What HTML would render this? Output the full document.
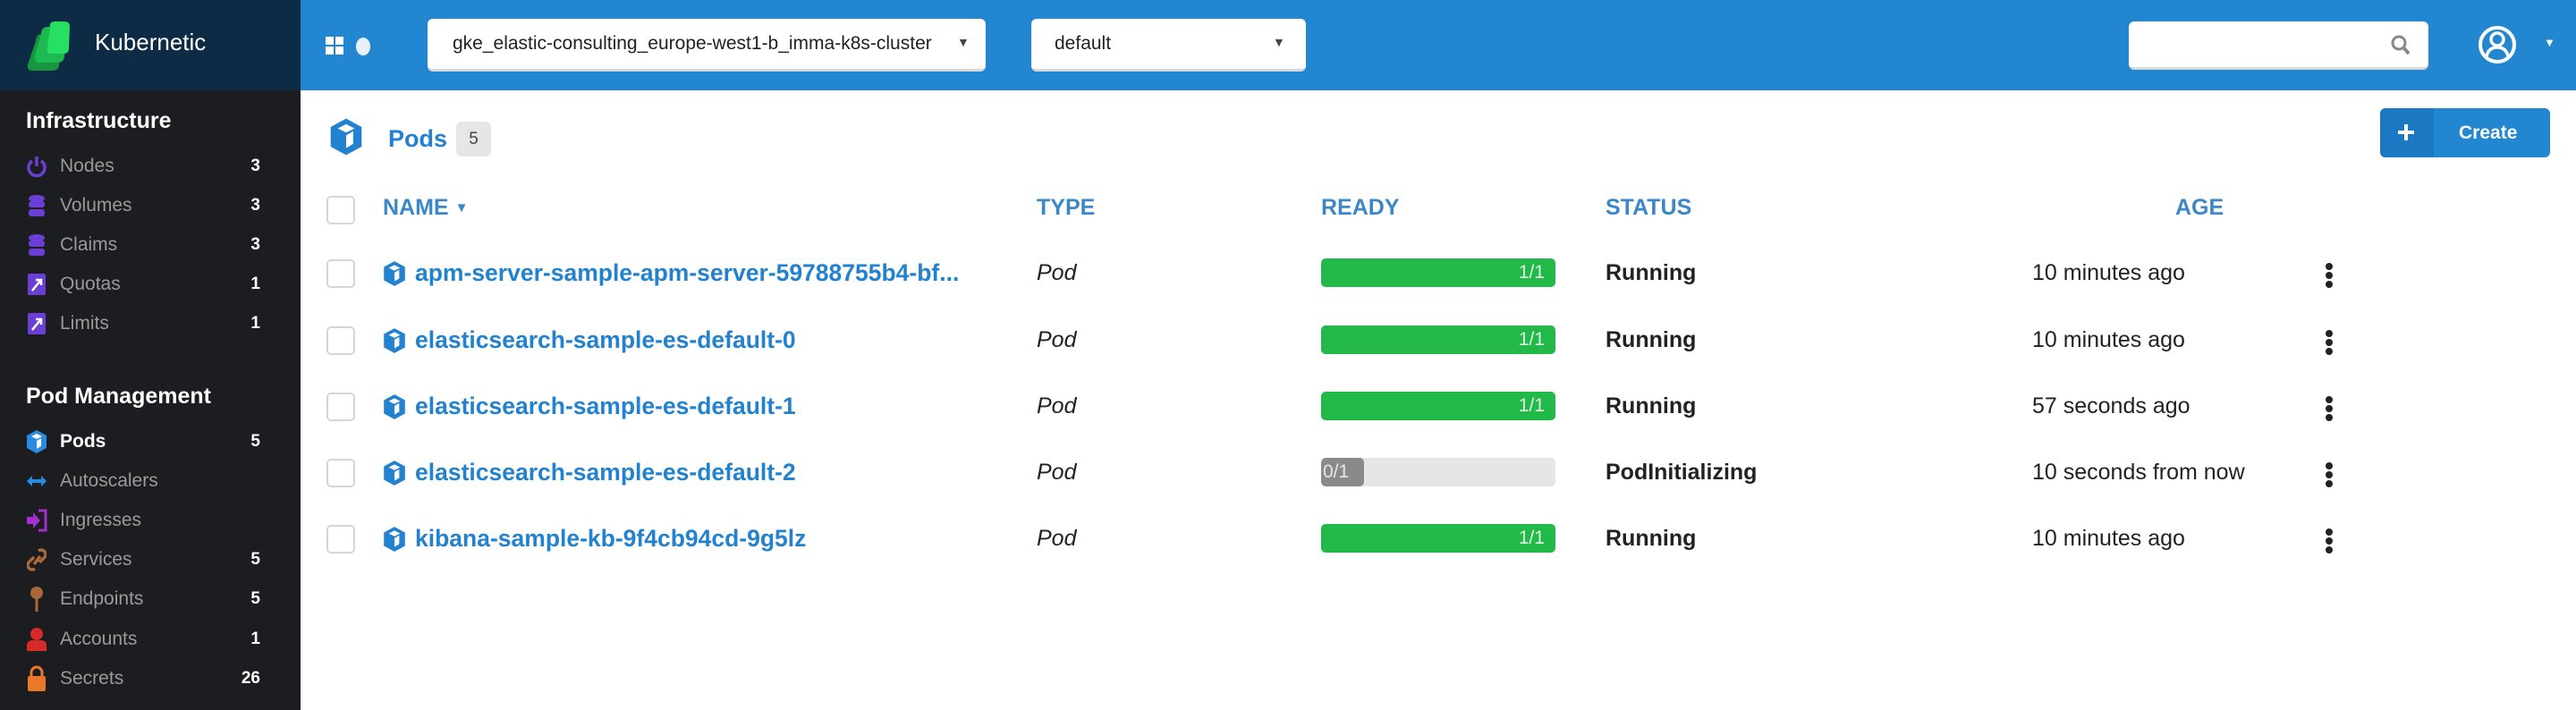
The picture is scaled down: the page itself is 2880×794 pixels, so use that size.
<!DOCTYPE html>
<html><head><meta charset="utf-8"><style>
*{box-sizing:border-box;margin:0;padding:0}
body{width:2880px;height:794px;overflow:hidden;background:#fff;font-family:"Liberation Sans",sans-serif;position:relative}
.a{position:absolute}
#side{left:0;top:0;width:336px;height:794px;background:#1c1d20}
#logo{left:0;top:0;width:336px;height:101px;background:#0d2b45}
#top{left:336px;top:0;width:2544px;height:101px;background:#2286d0}
.sel{background:#fff;border-radius:6px;border-bottom:3px solid #d8d8d8}
.sh{color:#fff;font-size:25px;font-weight:bold;left:29px}
.it{left:29px;width:262px;height:30px;display:flex;align-items:center;font-size:21px;color:#9a9a9a}
.it .ic{width:24px;height:26px;margin-right:14px;display:flex;align-items:center;justify-content:center}
.it .n{margin-left:auto;color:#fff;font-size:19px;font-weight:bold}
.th{top:218px;color:#3b87c8;font-size:25px;font-weight:bold}
.cb{width:32px;height:32px;border:2px solid #d6d6d6;border-radius:5px;background:#fff}
.nm{left:428px;color:#2382cf;font-size:26.5px;font-weight:bold;display:flex;align-items:center;gap:10px;white-space:nowrap}
.ty{left:1159px;font-style:italic;font-size:25px;color:#222}
.bar{left:1477px;width:262px;height:32px;border-radius:5px;background:#e6e6e6;overflow:hidden}
.st{left:1795px;font-size:25px;font-weight:bold;color:#222}
.ag{left:2272px;font-size:25px;color:#222}
.kb{left:2600px;width:10px}
.kb i{display:block;width:8px;height:8px;border-radius:50%;background:#222;margin:2px 0}
</style></head><body>
<div class="a" id="side"></div>
<div class="a" id="logo">
 <svg class="a" style="left:28px;top:24px" width="56" height="56" viewBox="0 0 56 56">
  <path d="M12 22 Q12 14 20 14 L36 14 Q40 14 40 20 L38 48 Q38 55 30 55 L8 55 Q2 55 3 48 Z" fill="#17963f"/>
  <path d="M18 14 Q18 6 26 6 L40 6 Q46 6 46 12 L44 38 Q44 46 36 46 L16 46 Q10 46 11 38 Z" fill="#1dba4f"/>
  <path d="M28 4 Q28 0 34 0 L44 0 Q50 0 50 6 L49 30 Q49 36 43 36 L30 36 Q24 36 25 30 Z" fill="#27e063"/>
 </svg>
 <div class="a" style="left:106px;top:32px;color:#fff;font-size:26px">Kubernetic</div>
</div>
<div class="a" id="top">
 <svg class="a" style="left:28px;top:41px" width="60" height="22"><rect x="0" y="0" width="9" height="9" fill="#fff"/><rect x="11" y="0" width="9" height="9" fill="#fff"/><rect x="0" y="11" width="9" height="9" fill="#fff"/><rect x="11" y="11" width="9" height="9" fill="#fff"/><ellipse cx="42" cy="11" rx="8" ry="10" fill="#e8f0fa"/></svg>
 <div class="a sel" style="left:142px;top:21px;width:624px;height:59px"><span class="a" style="left:28px;top:16px;font-size:21px;color:#222">gke_elastic-consulting_europe-west1-b_imma-k8s-cluster</span><span class="a" style="left:592px;top:18px;font-size:14px;color:#444">▼</span></div>
 <div class="a sel" style="left:817px;top:21px;width:307px;height:59px"><span class="a" style="left:26px;top:16px;font-size:21px;color:#222">default</span><span class="a" style="left:270px;top:18px;font-size:14px;color:#444">▼</span></div>
 <div class="a sel" style="left:2044px;top:24px;width:335px;height:54px"><svg class="a" style="left:292px;top:14px" width="24" height="26"><circle cx="10" cy="10" r="7" stroke="#888" stroke-width="3" fill="none"/><line x1="15" y1="15" x2="21" y2="22" stroke="#888" stroke-width="4"/></svg></div>
 <svg class="a" style="left:2434px;top:26px" width="44" height="48"><circle cx="22" cy="24" r="19" stroke="#fff" stroke-width="4" fill="none"/><circle cx="22" cy="18" r="7" stroke="#fff" stroke-width="3.5" fill="none"/><path d="M10 37 Q12 27 22 27 Q32 27 34 37" stroke="#fff" stroke-width="3.5" fill="none"/></svg>
 <span class="a" style="left:2508px;top:40px;color:#fff;font-size:13px">▼</span>
</div>

<div class="a sh" style="top:121px">Infrastructure</div>
<div class="a it" style="top:171px"><span class="ic"><svg width="22" height="24"><path d="M6 6 A9 9 0 1 0 16 6" stroke="#6b3fd6" stroke-width="3.5" fill="none"/><line x1="11" y1="1" x2="11" y2="12" stroke="#6b3fd6" stroke-width="3.5"/></svg></span>Nodes<span class="n">3</span></div>
<div class="a it" style="top:215px"><span class="ic"><svg width="20" height="26"><ellipse cx="10" cy="5" rx="9" ry="4" fill="#6b3fd6"/><rect x="1" y="8" width="18" height="7" rx="3" fill="#6b3fd6"/><rect x="1" y="17" width="18" height="8" rx="3" fill="#6b3fd6"/></svg></span>Volumes<span class="n">3</span></div>
<div class="a it" style="top:259px"><span class="ic"><svg width="20" height="26"><ellipse cx="10" cy="5" rx="9" ry="4" fill="#6b3fd6"/><rect x="1" y="8" width="18" height="7" rx="3" fill="#6b3fd6"/><rect x="1" y="17" width="18" height="8" rx="3" fill="#6b3fd6"/></svg></span>Claims<span class="n">3</span></div>
<div class="a it" style="top:303px"><span class="ic"><svg width="20" height="24"><rect width="20" height="24" rx="2" fill="#6b3fd6"/><path d="M5 19 L14 8 M9 7 L15 7 L15 13" stroke="#fff" stroke-width="2.5" fill="none"/></svg></span>Quotas<span class="n">1</span></div>
<div class="a it" style="top:347px"><span class="ic"><svg width="20" height="24"><rect width="20" height="24" rx="2" fill="#6b3fd6"/><path d="M5 19 L14 8 M9 7 L15 7 L15 13" stroke="#fff" stroke-width="2.5" fill="none"/></svg></span>Limits<span class="n">1</span></div>

<div class="a sh" style="top:429px">Pod Management</div>
<div class="a it" style="top:479px;color:#fff;font-weight:bold"><span class="ic"><svg width="24" height="28" viewBox="0 0 24 28"><path d="M12 1 L23 7 L23 21 L12 27 L1 21 L1 7 Z" fill="#2a8ce0"/><path d="M6 8 L12 5 L18 8 L12 11 Z M12 13 L17 10 L17 19 L12 22 Z" fill="#fff"/></svg></span>Pods<span class="n">5</span></div>
<div class="a it" style="top:523px"><span class="ic"><svg width="24" height="14"><path d="M1 7 L7 1 L7 13 Z M23 7 L17 1 L17 13 Z" fill="#2a8ce0"/><rect x="5" y="5" width="14" height="4" fill="#2a8ce0"/></svg></span>Autoscalers</div>
<div class="a it" style="top:567px"><span class="ic"><svg width="24" height="26"><path d="M14 2 L22 2 L22 24 L14 24" stroke="#a22fd0" stroke-width="3" fill="none"/><path d="M1 9 L8 9 L8 4 L16 13 L8 22 L8 17 L1 17 Z" fill="#a22fd0"/></svg></span>Ingresses</div>
<div class="a it" style="top:611px"><span class="ic"><svg width="22" height="28"><path d="M13 4 a5 5 0 0 1 7 7 l-6 6 M9 24 a5 5 0 0 1 -7 -7 l6 -6 M8 19 L15 10" stroke="#a8683a" stroke-width="3.5" fill="none"/></svg></span>Services<span class="n">5</span></div>
<div class="a it" style="top:655px"><span class="ic"><svg width="16" height="30"><circle cx="8" cy="8" r="7" fill="#a8683a"/><rect x="6.5" y="14" width="3" height="15" fill="#a8683a"/></svg></span>Endpoints<span class="n">5</span></div>
<div class="a it" style="top:700px"><span class="ic"><svg width="24" height="28"><circle cx="12" cy="8" r="7" fill="#d62a2a"/><path d="M1 27 L1 21 Q1 15 8 15 L16 15 Q23 15 23 21 L23 27 Z" fill="#d62a2a"/></svg></span>Accounts<span class="n">1</span></div>
<div class="a it" style="top:744px"><span class="ic"><svg width="22" height="30"><path d="M5 13 L5 8 A6 6 0 0 1 17 8 L17 13" stroke="#e8782a" stroke-width="3" fill="none"/><rect x="1" y="12" width="20" height="17" rx="2" fill="#e8782a"/></svg></span>Secrets<span class="n">26</span></div>

<svg class="a" style="left:366px;top:131px" width="42" height="44" viewBox="0 0 24 28"><path d="M12 1 L23 7 L23 21 L12 27 L1 21 L1 7 Z" fill="#2382cf"/><path d="M6 8 L12 5 L18 8 L12 11 Z M12 13 L17 10 L17 19 L12 22 Z" fill="#fff"/></svg>
<div class="a" style="left:434px;top:140px;color:#2382cf;font-size:27px;font-weight:bold">Pods</div>
<div class="a" style="left:510px;top:136px;width:39px;height:39px;background:#e6e6e6;border-radius:6px;font-size:19px;color:#444;text-align:center;line-height:39px">5</div>
<div class="a" style="left:2661px;top:121px;width:190px;height:55px;background:#2286d0;border-radius:6px;overflow:hidden">
 <div class="a" style="left:0;top:0;width:60px;height:55px;background:#1b78c2"></div>
 <div class="a" style="left:20px;top:25px;width:18px;height:4px;background:#fff"></div>
 <div class="a" style="left:27px;top:18px;width:4px;height:18px;background:#fff"></div>
 <div class="a" style="left:88px;top:16px;color:#fff;font-size:21px;font-weight:bold">Create</div>
</div>

<div class="a cb" style="left:365px;top:219px"></div>
<div class="a th" style="left:428px">NAME <span style="font-size:15px;position:relative;top:-3px">▼</span></div>
<div class="a th" style="left:1159px">TYPE</div>
<div class="a th" style="left:1477px">READY</div>
<div class="a th" style="left:1795px">STATUS</div>
<div class="a th" style="left:2432px">AGE</div>

<div class="a cb" style="left:365px;top:290px"></div>
<div class="a cb" style="left:365px;top:365px"></div>
<div class="a cb" style="left:365px;top:439px"></div>
<div class="a cb" style="left:365px;top:513px"></div>
<div class="a cb" style="left:365px;top:587px"></div>

<div class="a nm" style="top:290px"><svg width="26" height="30" viewBox="0 0 24 28"><path d="M12 1 L23 7 L23 21 L12 27 L1 21 L1 7 Z" fill="#2382cf"/><path d="M6 8 L12 5 L18 8 L12 11 Z M12 13 L17 10 L17 19 L12 22 Z" fill="#fff"/></svg>apm-server-sample-apm-server-59788755b4-bf...</div>
<div class="a nm" style="top:365px"><svg width="26" height="30" viewBox="0 0 24 28"><path d="M12 1 L23 7 L23 21 L12 27 L1 21 L1 7 Z" fill="#2382cf"/><path d="M6 8 L12 5 L18 8 L12 11 Z M12 13 L17 10 L17 19 L12 22 Z" fill="#fff"/></svg>elasticsearch-sample-es-default-0</div>
<div class="a nm" style="top:439px"><svg width="26" height="30" viewBox="0 0 24 28"><path d="M12 1 L23 7 L23 21 L12 27 L1 21 L1 7 Z" fill="#2382cf"/><path d="M6 8 L12 5 L18 8 L12 11 Z M12 13 L17 10 L17 19 L12 22 Z" fill="#fff"/></svg>elasticsearch-sample-es-default-1</div>
<div class="a nm" style="top:513px"><svg width="26" height="30" viewBox="0 0 24 28"><path d="M12 1 L23 7 L23 21 L12 27 L1 21 L1 7 Z" fill="#2382cf"/><path d="M6 8 L12 5 L18 8 L12 11 Z M12 13 L17 10 L17 19 L12 22 Z" fill="#fff"/></svg>elasticsearch-sample-es-default-2</div>
<div class="a nm" style="top:587px"><svg width="26" height="30" viewBox="0 0 24 28"><path d="M12 1 L23 7 L23 21 L12 27 L1 21 L1 7 Z" fill="#2382cf"/><path d="M6 8 L12 5 L18 8 L12 11 Z M12 13 L17 10 L17 19 L12 22 Z" fill="#fff"/></svg>kibana-sample-kb-9f4cb94cd-9g5lz</div>

<div class="a ty" style="top:291px">Pod</div>
<div class="a ty" style="top:366px">Pod</div>
<div class="a ty" style="top:440px">Pod</div>
<div class="a ty" style="top:514px">Pod</div>
<div class="a ty" style="top:588px">Pod</div>

<div class="a bar" style="top:289px;background:#22b948"><span class="a" style="right:12px;top:4px;color:#dff5e5;font-size:21px">1/1</span></div>
<div class="a bar" style="top:364px;background:#22b948"><span class="a" style="right:12px;top:4px;color:#dff5e5;font-size:21px">1/1</span></div>
<div class="a bar" style="top:438px;background:#22b948"><span class="a" style="right:12px;top:4px;color:#dff5e5;font-size:21px">1/1</span></div>
<div class="a bar" style="top:512px"><div class="a" style="left:0;top:0;width:48px;height:32px;background:#8a8a8a;border-radius:5px"></div><span class="a" style="left:2px;top:4px;color:#e6e6e6;font-size:21px">0/1</span></div>
<div class="a bar" style="top:586px;background:#22b948"><span class="a" style="right:12px;top:4px;color:#dff5e5;font-size:21px">1/1</span></div>

<div class="a st" style="top:291px">Running</div>
<div class="a st" style="top:366px">Running</div>
<div class="a st" style="top:440px">Running</div>
<div class="a st" style="top:514px">PodInitializing</div>
<div class="a st" style="top:588px">Running</div>

<div class="a ag" style="top:291px">10 minutes ago</div>
<div class="a ag" style="top:366px">10 minutes ago</div>
<div class="a ag" style="top:440px">57 seconds ago</div>
<div class="a ag" style="top:514px">10 seconds from now</div>
<div class="a ag" style="top:588px">10 minutes ago</div>

<div class="a kb" style="top:292px"><i></i><i></i><i></i></div>
<div class="a kb" style="top:367px"><i></i><i></i><i></i></div>
<div class="a kb" style="top:441px"><i></i><i></i><i></i></div>
<div class="a kb" style="top:515px"><i></i><i></i><i></i></div>
<div class="a kb" style="top:589px"><i></i><i></i><i></i></div>
</body></html>
